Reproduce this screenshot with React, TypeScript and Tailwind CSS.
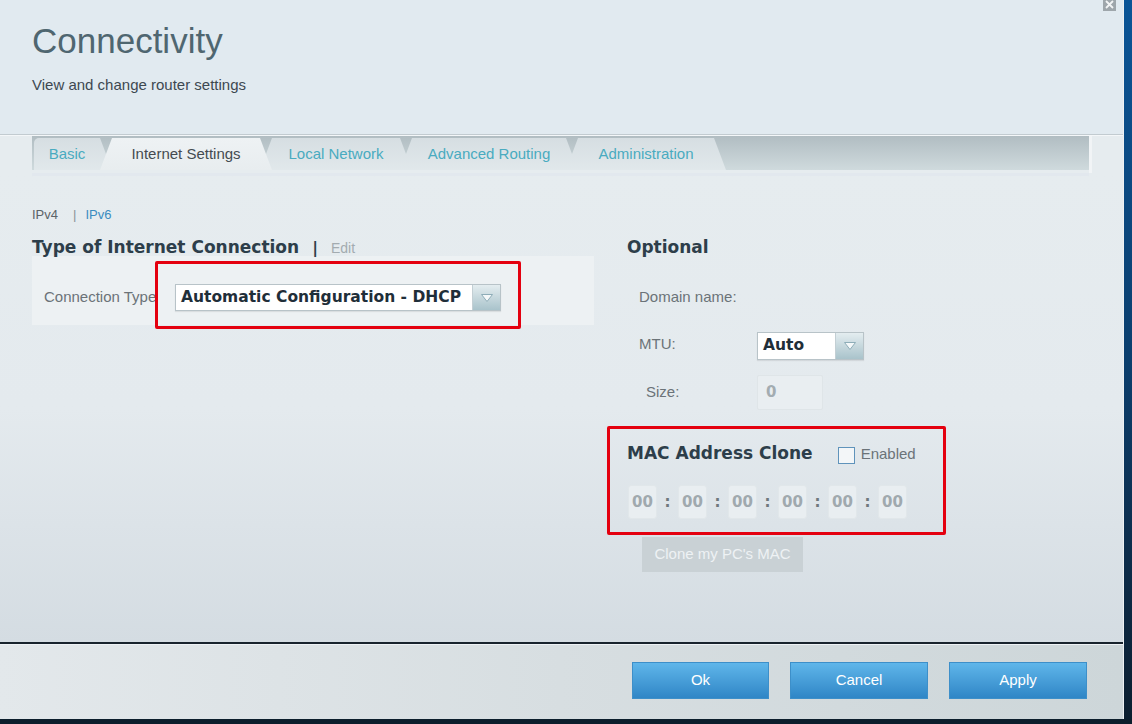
import React from "react";

const bold = "font-['DejaVu_Sans',Verdana,sans-serif] font-bold";

function Arrow() {
  return (
    <div className="w-[28px] h-full flex items-center justify-center border-l border-[#c3cfd4] bg-gradient-to-b from-[#e4edf0] to-[#a9c3cb]">
      <svg width="14" height="10" viewBox="0 0 14 10">
        <polygon points="1.5,1.5 12.5,1.5 7,8.5" fill="#f4f8f9" stroke="#8eadb8" strokeWidth="1" />
      </svg>
    </div>
  );
}

function Select({ value, width }: { value: string; width: string }) {
  return (
    <div className={`${width} h-full flex bg-white border border-[#b8c3c8] shadow-[0_1px_1px_rgba(0,0,0,0.08)]`}>
      <div className={`flex-1 flex items-center pl-[5px] text-[15.5px] text-[#1f2e39] whitespace-nowrap ${bold}`}>{value}</div>
      <Arrow />
    </div>
  );
}

const tabs = [
  { label: "Basic", w: "w-[78px]", clip: "[clip-path:polygon(0_0,66px_0,100%_100%,0_100%)]", pad: "pr-[12px]" },
  { label: "Internet Settings", w: "w-[172px]", clip: "[clip-path:polygon(12px_0,calc(100%-12px)_0,100%_100%,0_100%)]", active: true },
  { label: "Local Network", w: "w-[152px]", clip: "[clip-path:polygon(12px_0,calc(100%-12px)_0,100%_100%,0_100%)]" },
  { label: "Advanced Routing", w: "w-[178px]", clip: "[clip-path:polygon(12px_0,calc(100%-12px)_0,100%_100%,0_100%)]" },
  { label: "Administration", w: "w-[160px]", clip: "[clip-path:polygon(12px_0,calc(100%-12px)_0,100%_100%,0_100%)]" },
];

function MacField() {
  return (
    <div className={`w-[29px] h-[34px] rounded-[3px] bg-[#e9eef1] border border-[#e1e7ea] flex items-center justify-center text-[15px] text-[#a0a9ae] ${bold}`}>
      00
    </div>
  );
}

export default function App() {
  return (
    <div className="w-[1132px] h-[724px] flex flex-col bg-[#0c1e2c] overflow-hidden font-['Liberation_Sans',Arial,sans-serif]">
      <div className="flex flex-1 min-h-0">
        <div className="relative w-[1124px] flex flex-col bg-[#e6ecef] border-r border-[#eef2f4]">
          {/* close */}
          <div className="absolute right-[7px] top-[-2px] w-[13px] h-[13px] bg-[#9ea6ab] flex items-center justify-center">
            <svg width="9" height="9" viewBox="0 0 9 9">
              <path d="M1 1L8 8M8 1L1 8" stroke="#f2f4f5" strokeWidth="1.8" />
            </svg>
          </div>

          {/* header */}
          <div className="h-[134px] bg-[#e1eaf0] pl-8 pt-[23px]">
            <div className="text-[35px] leading-none text-[#4f6670]">Connectivity</div>
            <div className="mt-[19px] text-[15px] leading-none text-[#3d4850]">View and change router settings</div>
          </div>
          <div className="h-px bg-[#c2cbd0]" />
          <div className="h-px bg-[#f4f7f9]" />

          {/* tabs */}
          <div className="ml-8 w-[1060px] flex">
            <div className="w-[1057px] h-[34px] pt-[2px] flex bg-gradient-to-b from-[#b1bdc2] to-[#cfdadd]">
              {tabs.map((t, i) => (
                <div
                  key={t.label}
                  className={`${t.w} ${t.clip} ${i === 0 ? "ml-[2px] rounded-tl-[5px]" : "-ml-[12px]"} ${t.pad ?? ""} h-[32px] flex items-center justify-center text-[15px] whitespace-nowrap ${
                    t.active
                      ? "relative z-10 bg-gradient-to-b from-[#eef2f4] to-[#e8edef] text-[#444b50]"
                      : "bg-gradient-to-b from-[#d6dee2] to-[#e1e8eb] text-[#49abc0]"
                  }`}
                >
                  {t.label}
                </div>
              ))}
            </div>
            <div className="w-[3px] h-[37px] bg-[#f1f4f6]" />
          </div>
          <div className="ml-8 w-[1057px] h-[3px] bg-[#e2e8ee]" />

          {/* content */}
          <div className="flex-1 px-8 pt-[32px] bg-gradient-to-b from-[#e6ecef] via-[#e4eaee] to-[#d4dce2]">
            <div className="h-[13px] flex items-center text-[13px] leading-[13px]">
              <span className="text-[#5b6368]">IPv4</span>
              <span className="ml-[15px] text-[#8a9398]">|</span>
              <span className="ml-[9px] text-[#3b8cc0]">IPv6</span>
            </div>

            <div className="mt-[18px] flex gap-[33px]">
              {/* left column */}
              <div className="w-[562px]">
                <div className="h-[17px] flex items-center">
                  <span className={`text-[17px] leading-none text-[#2d3e4a] ${bold}`}>Type of Internet Connection</span>
                  <span className={`ml-[13px] text-[16px] leading-none text-[#2d3e4a] ${bold}`}>|</span>
                  <span className="ml-[13px] text-[14px] leading-none text-[#a3abb0]">Edit</span>
                </div>
                <div className="h-[69px] bg-[#edf1f3] pl-[12px] pt-[28px]">
                  <div className="h-[27px] flex items-center">
                    <div className="w-[131px] overflow-hidden whitespace-nowrap text-[15px] text-[#6b7378]">Connection Type</div>
                    <Select value="Automatic Configuration - DHCP" width="w-[326px]" />
                  </div>
                </div>
              </div>

              {/* right column */}
              <div className="flex-1">
                <div className={`h-[17px] text-[17px] leading-none text-[#2d3e4a] ${bold}`}>Optional</div>
                <div className="mt-[27px] h-[28px] flex items-center pl-[12px] text-[15px] text-[#6b7378]">Domain name:</div>
                <div className="mt-[21px] h-[28px] flex items-center">
                  <div className="w-[130px] pl-[12px] text-[15px] text-[#6b7378] -mt-[3px]">MTU:</div>
                  <Select value="Auto" width="w-[107px]" />
                </div>
                <div className="mt-[15px] h-[35px] flex items-center">
                  <div className="w-[130px] pl-[19px] text-[15px] text-[#6b7378]">Size:</div>
                  <div className={`w-[66px] h-full rounded-[2px] bg-[#e9eef1] border border-[#dfe5e8] flex items-center pl-[8px] text-[15px] text-[#a3acb1] ${bold}`}>0</div>
                </div>
                <div className="mt-[35px] h-[17px] flex items-center">
                  <span className={`text-[17px] leading-none text-[#2d3e4a] ${bold}`}>MAC Address Clone</span>
                  <div className="ml-[25px] mt-[4px] w-[17px] h-[17px] border border-[#5f93bb] bg-[#f3f6f8]" />
                  <span className="ml-[6px] mt-[2px] text-[15px] text-[#6b7378]">Enabled</span>
                </div>
                <div className="mt-[23px] pl-px flex items-center">
                  {[0, 1, 2, 3, 4, 5].map((i) => (
                    <React.Fragment key={i}>
                      {i > 0 && (
                        <div className={`w-[21px] text-center text-[15px] text-[#6f787d] ${bold}`}>:</div>
                      )}
                      <MacField />
                    </React.Fragment>
                  ))}
                </div>
                <div className="mt-[18px] ml-[15px] w-[161px] h-[35px] bg-[#c9d1d5] flex items-center justify-center text-[15px] text-[#eef2f4]">
                  Clone my PC's MAC
                </div>
              </div>
            </div>
          </div>

          {/* separator */}
          <div className="h-[2px] bg-[#18232d]" />
          <div className="h-px bg-[#eef2f5]" />

          {/* footer */}
          <div className="h-[74px] pt-[17px] pr-[36px] flex justify-end gap-[21px] bg-gradient-to-r from-[#e3e8eb] via-[#d7dee1] to-[#cdd6d9]">
            {["Ok", "Cancel", "Apply"].map((b, i) => (
              <div
                key={b}
                className={`${i === 0 ? "w-[137px]" : "w-[138px]"} h-[37px] flex items-center justify-center text-[15px] text-white bg-gradient-to-b from-[#5fb6ea] to-[#2f86c6] border border-[#3d8fc9]`}
              >
                {b}
              </div>
            ))}
          </div>

          {/* annotation boxes */}
          <div className="absolute left-[155px] top-[261px] w-[366px] h-[68px] border-[3px] border-[#e4000f] rounded-[2px]" />
          <div className="absolute left-[607px] top-[426px] w-[339px] h-[109px] border-[3px] border-[#e4000f] rounded-[2px]" />
        </div>
        <div className="w-[8px] bg-gradient-to-b from-[#0a5597] via-[#0b3f6e] to-[#0c1f30]" />
      </div>
      <div className="h-[5px] bg-[#0c1e2c]" />
    </div>
  );
}
